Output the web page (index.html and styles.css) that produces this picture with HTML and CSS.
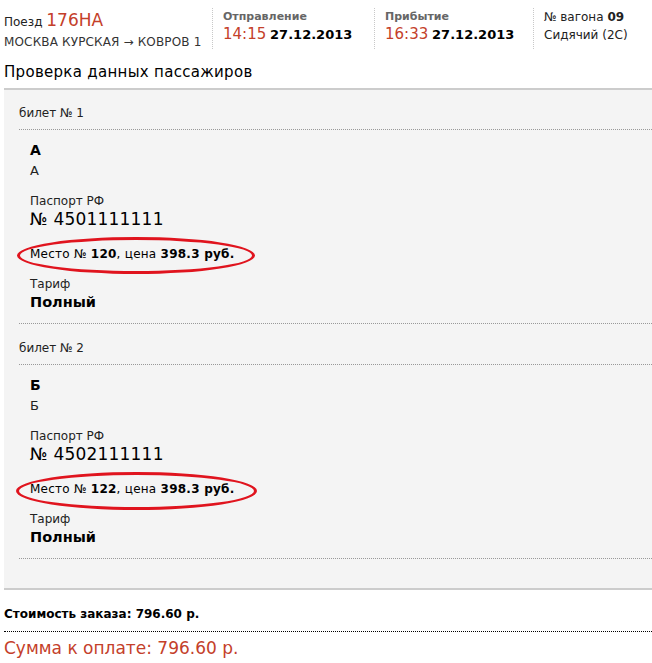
FILE: index.html
```html
<!DOCTYPE html>
<html lang="ru">
<head>
<meta charset="utf-8">
<title>Проверка данных пассажиров</title>
<link rel="stylesheet" href="styles.css">
</head>
<body>
<div class="page">
  <div class="trip">
    <div class="col col-train">
      <div class="train-line">Поезд <span class="train-no">176НА</span></div>
      <div class="route">МОСКВА КУРСКАЯ → КОВРОВ 1</div>
    </div>
    <div class="col col-time">
      <div class="cap">Отправление</div>
      <div class="when"><span class="time">14:15</span> <span class="date">27.12.2013</span></div>
    </div>
    <div class="col col-time">
      <div class="cap">Прибытие</div>
      <div class="when"><span class="time">16:33</span> <span class="date">27.12.2013</span></div>
    </div>
    <div class="col col-car">
      <div class="car-line">№ вагона <b>09</b></div>
      <div class="car-line">Сидячий (2С)</div>
    </div>
  </div>

  <h1 class="title">Проверка данных пассажиров</h1>

  <div class="panel">
    <div class="ticket">
      <div class="ticket-label">билет № 1</div>
      <div class="ticket-body">
        <div class="surname">А</div>
        <div class="given">А</div>
        <div class="doc-label">Паспорт РФ</div>
        <div class="doc-no">№ 4501111111</div>
        <div class="seat">Место № <b>120</b>, цена <b>398.3 руб.</b><span class="mark"></span></div>
        <div class="tariff-label">Тариф</div>
        <div class="tariff">Полный</div>
      </div>
    </div>
    <div class="ticket">
      <div class="ticket-label">билет № 2</div>
      <div class="ticket-body">
        <div class="surname">Б</div>
        <div class="given">Б</div>
        <div class="doc-label">Паспорт РФ</div>
        <div class="doc-no">№ 4502111111</div>
        <div class="seat">Место № <b>122</b>, цена <b>398.3 руб.</b><span class="mark mark-2"></span></div>
        <div class="tariff-label">Тариф</div>
        <div class="tariff">Полный</div>
      </div>
    </div>
  </div>

  <div class="order-cost">Стоимость заказа: 796.60 р.</div>
  <div class="to-pay">Сумма к оплате: 796.60 р.</div>
</div>
</body>
</html>
```

FILE: styles.css
```css
* { box-sizing: border-box; }

body {
  margin: 0;
  background: #fff;
  color: #000;
  font-family: "DejaVu Sans", Verdana, sans-serif;
  font-size: 12px;
}

.page {
  padding-left: 4px;
}

/* header */
.trip {
  display: flex;
  height: 62px;
  padding-top: 8px;
}

.col {
  border-left: 1px dotted #c8c8c8;
  padding-left: 10px;
  height: 41px;
}

.col-train {
  border-left: none;
  padding-left: 0;
  width: 208px;
}

.col-time { width: 162px; }
.col-time + .col-time { width: 159px; }

.col-car { flex: 1; }

.train-line {
  font-size: 12px;
  line-height: 24px;
  color: #222;
}

.train-no {
  color: #c4402a;
  font-size: 17px;
}

.route {
  font-size: 12px;
  line-height: 16px;
  color: #333;
  letter-spacing: 0.15px;
}

.cap {
  font-size: 11px;
  font-weight: bold;
  color: #666;
  line-height: 16px;
  margin-top: 1px;
}

.when {
  line-height: 18px;
}

.time {
  color: #c4402a;
  font-size: 15px;
}

.date {
  font-size: 13px;
  font-weight: bold;
}

.car-line {
  font-size: 12px;
  line-height: 17px;
  color: #222;
  margin-top: 1px;
}

.title {
  margin: 0;
  font-size: 15px;
  font-weight: normal;
  line-height: 18px;
  letter-spacing: 0.3px;
  height: 26px;
  padding-top: 1px;
}

/* passengers */
.panel {
  background: #f4f4f4;
  border-top: 2px solid #cccccc;
  border-bottom: 2px solid #cccccc;
  padding: 0 0 29px 15px;
}

.ticket {
  padding-top: 15px;
}

.ticket + .ticket {
  padding-top: 16px;
}

.ticket-label {
  font-size: 12px;
  line-height: 16px;
  color: #222;
  padding-bottom: 8px;
  border-bottom: 1px dotted #999;
}

.ticket-body {
  padding: 11px 0 12px 11px;
  border-bottom: 1px dotted #999;
}

.surname {
  font-size: 14px;
  font-weight: bold;
  line-height: 18px;
}

.given {
  font-size: 13px;
  line-height: 16px;
  margin-top: 4px;
  color: #222;
}

.doc-label {
  font-size: 12px;
  line-height: 15px;
  margin-top: 15px;
  color: #222;
}

.doc-no {
  font-size: 17px;
  line-height: 20px;
  letter-spacing: 0.2px;
}

.seat {
  position: relative;
  font-size: 12px;
  line-height: 14px;
  letter-spacing: 0.25px;
  margin-top: 18px;
}

.mark {
  position: absolute;
  left: -13px;
  top: -10px;
  width: 238px;
  height: 37px;
  border: 3px solid #e0141e;
  border-radius: 50%;
}

.mark-2 {
  left: -14px;
  width: 241px;
  height: 38px;
}

.tariff-label {
  font-size: 12px;
  line-height: 16px;
  margin-top: 15px;
  color: #222;
}

.tariff {
  font-size: 14.5px;
  font-weight: bold;
  line-height: 18px;
  margin-top: 1px;
}

.order-cost {
  font-size: 12px;
  font-weight: bold;
  line-height: 14px;
  padding-top: 17px;
  padding-bottom: 10px;
  border-bottom: 1px dotted #000;
}

.to-pay {
  color: #c4402a;
  font-size: 17px;
  line-height: 20px;
  padding-top: 6px;
}
```
